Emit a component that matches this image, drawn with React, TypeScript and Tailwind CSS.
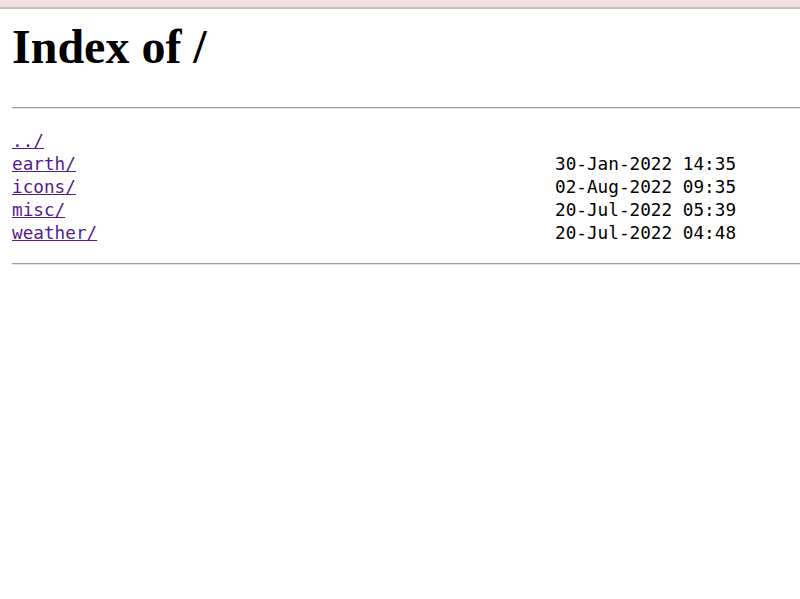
const ENTRIES: { name: string; date?: string }[] = [
  { name: '../' },
  { name: 'earth/', date: '30-Jan-2022 14:35' },
  { name: 'icons/', date: '02-Aug-2022 09:35' },
  { name: 'misc/', date: '20-Jul-2022 05:39' },
  { name: 'weather/', date: '20-Jul-2022 04:48' },
];

function Rule() {
  return <div className="ml-3 h-[2px] border-t border-b border-t-[#9c9c9c] border-b-[#e4e4e4]" />;
}

export default function App() {
  return (
    <div className="min-h-screen overflow-hidden bg-white text-black">
      <div className="h-[9px] bg-[#f0e2e2] border-b-2 border-[#c9bbbb]" />

      <h1 className="ml-3 mt-[11px] mb-[34px] text-[48px] leading-[53px] font-bold font-['Liberation_Serif',serif]">
        Index of /
      </h1>

      <Rule />

      <div className="ml-3 mt-[21px] mb-[18px] font-['DejaVu_Sans_Mono',monospace] text-[17.7px] leading-[23px]">
        {ENTRIES.map((e) => (
          <div key={e.name} className="flex h-[23px] whitespace-pre">
            <div className="w-[543px] shrink-0">
              <a href="#" className="text-[#551a8b] underline">
                {e.name}
              </a>
            </div>
            {e.date && <span>{e.date}</span>}
          </div>
        ))}
      </div>

      <Rule />
    </div>
  );
}
